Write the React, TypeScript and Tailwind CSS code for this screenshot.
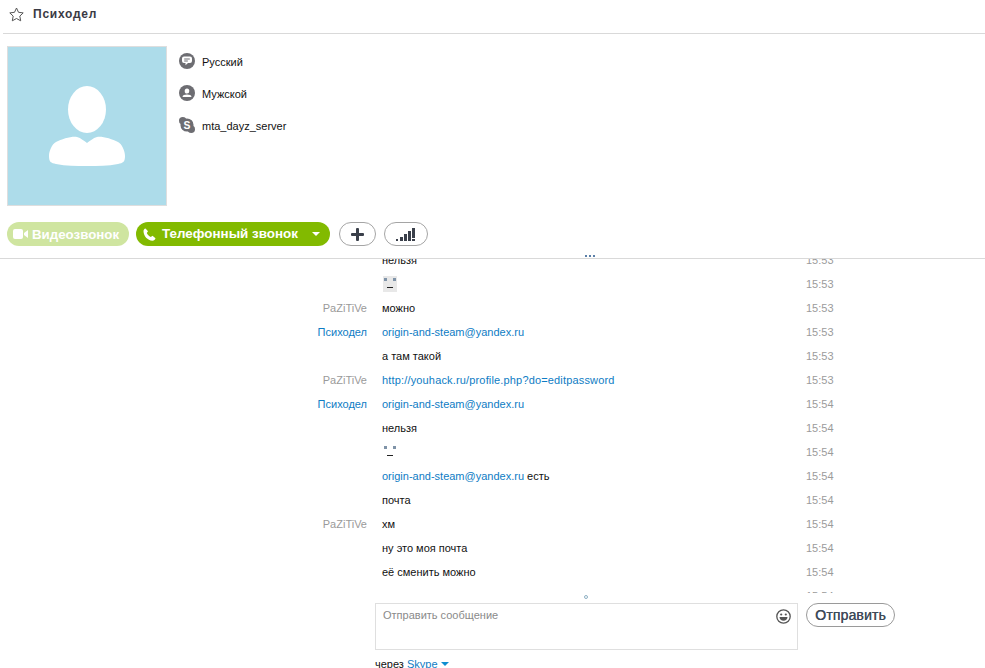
import React from "react";

type Row = { n?: string; c?: "g" | "b"; m: React.ReactNode; t: string };
const L = ({ children }: { children: React.ReactNode }) => <span className="text-[#0e7cc4]">{children}</span>;
const Face = ({ bg }: { bg?: boolean }) => (
  <span className={`relative block ml-[1px] w-[14px] h-[16px] ${bg ? "bg-[#e8e8e8]" : ""}`}>
    <span className="absolute left-[1px] top-[2px] w-[3px] h-[3px] bg-[#7f93a8]" />
    <span className="absolute right-[1px] top-[2px] w-[3px] h-[3px] bg-[#7f93a8]" />
    <span className="absolute left-[4px] top-[11px] w-[6px] h-[1px] bg-[#222]" />
  </span>
);
const EM = "origin-and-steam@yandex.ru";
const rows: Row[] = [
  { m: "нельзя", t: "15:53" },
  { m: <Face bg />, t: "15:53" },
  { n: "PaZiTiVe", c: "g", m: "можно", t: "15:53" },
  { n: "Психодел", c: "b", m: <L>{EM}</L>, t: "15:53" },
  { m: "а там такой", t: "15:53" },
  { n: "PaZiTiVe", c: "g", m: <span className="tracking-[0.16px]"><L>http://youhack.ru/profile.php?do=editpassword</L></span>, t: "15:53" },
  { n: "Психодел", c: "b", m: <L>{EM}</L>, t: "15:54" },
  { m: "нельзя", t: "15:54" },
  { m: <Face />, t: "15:54" },
  { m: <><L>{EM}</L> есть</>, t: "15:54" },
  { m: "почта", t: "15:54" },
  { n: "PaZiTiVe", c: "g", m: "хм", t: "15:54" },
  { m: "ну это моя почта", t: "15:54" },
  { m: "её сменить можно", t: "15:54" },
  { m: "", t: "15:54" },
];

const G = "#6d6d72";
const Lang = () => (
  <svg width="16" height="16" viewBox="0 0 16 16"><circle cx="8" cy="8" r="8" fill={G} /><path d="M5 3.500h6a2 2 0 0 1 2 2v2.500a2 2 0 0 1-2 2H9l-2.500 2.300V10H5a2 2 0 0 1-2-2V5.500a2 2 0 0 1 2-2z" fill="#fff" /><path d="M5.200 6h5.600M5.200 8h3.600" stroke={G} strokeWidth="1" /></svg>
);
const User = () => (
  <svg width="16" height="16" viewBox="0 0 16 16"><circle cx="8" cy="8" r="8" fill={G} /><ellipse cx="8" cy="6" rx="2.300" ry="2.600" fill="#fff" /><path d="M3.500 12c0-2 2.200-2.600 4.500-2.600s4.500.6 4.500 2.600z" fill="#fff" /></svg>
);
const SkypeI = () => (
  <svg width="16" height="16" viewBox="0 0 17 17"><circle cx="8.500" cy="8.500" r="7" fill={G} /><circle cx="4" cy="4" r="4" fill={G} /><circle cx="13" cy="13" r="4" fill={G} /><text x="8.500" y="12.500" textAnchor="middle" fontSize="11" fontWeight="700" fill="#fff" fontFamily="Liberation Sans">S</text></svg>
);

export default function App() {
  return (
    <div className="relative w-[985px] h-[668px] overflow-hidden bg-white text-[11px] text-[#222] font-['Liberation_Sans',sans-serif]">
      <header className="ml-[3px] h-[34px] border-b border-[#d9d9d9] flex items-center pl-[6px] pb-[5px] gap-[9px]">
        <svg width="15" height="15" viewBox="0 0 15 15" fill="none" stroke="#555" strokeWidth="1"><path d="M7.500 1l2 4.300 4.700.6-3.400 3.200.9 4.700-4.200-2.300-4.200 2.300.9-4.700L.8 5.900l4.700-.6z" /></svg>
        <span className="text-[12px] tracking-[0.75px] font-bold text-[#3a3a44]">Психодел</span>
      </header>

      <section className="flex pl-[7px] pt-[12px] h-[176px]">
        <div className="w-[160px] h-[160px] border border-[#dedede] bg-[#addcea] flex items-center justify-center">
          <svg width="78" height="80" viewBox="0 0 78 80" fill="#fff">
            <ellipse cx="39" cy="23.500" rx="19" ry="23.500" />
            <path d="M1 70C1 65 4 58 8 56C14 53 24 50 29 51C33 52 36 55 39 57C42 55 45 52 49 51C54 50 64 53 70 56C74 58 77 65 77 70C77 76 75 77 70 78C60 80 50 80 39 80C28 80 18 80 8 78C3 77 1 76 1 70z" />
          </svg>
        </div>
        <ul className="ml-[12px] pt-[7px] flex flex-col gap-[16px] text-[#111]">
          <li className="flex items-center gap-[7px] h-[16px]"><Lang /><span className="pt-[2px]">Русский</span></li>
          <li className="flex items-center gap-[7px] h-[16px]"><User /><span className="pt-[2px]">Мужской</span></li>
          <li className="flex items-center gap-[7px] h-[16px]"><SkypeI /><span className="pt-[2px]">mta_dayz_server</span></li>
        </ul>
      </section>

      <div className="flex items-start h-[49px] pl-[7px] pt-[12px] border-b border-[#d9d9d9]">
        <button className="w-[122px] h-[24px] rounded-full bg-[#cfe5a0] text-white font-bold text-[13.300px] flex items-center pl-[6px] gap-[4px]">
          <svg width="15" height="10" viewBox="0 0 15 10" fill="#fff"><rect width="10" height="10" rx="2" /><path d="M11 4l4-3v8l-4-3z" /></svg>
          <span className="pt-[1px]">Видеозвонок</span>
        </button>
        <button className="ml-[7px] w-[194px] h-[24px] rounded-full bg-[#82ba00] text-white font-bold text-[13.400px] flex items-center pl-[7px]">
          <svg width="13" height="13" viewBox="0 0 13 13" fill="#fff"><path d="M2.500.5L5 3.200 3.800 5c.7 1.600 2.200 3.200 4 4l1.700-1.300 3 2.600c-.4 1.500-1.500 2.400-3 2.400C4.500 12.500.5 8 .5 3 .5 1.800 1.300.8 2.500.5z" /></svg>
          <span className="ml-[6px] pt-[1px]">Телефонный звонок</span>
          <span className="ml-[14px] w-0 h-0 border-x-[4px] border-x-transparent border-t-[4px] border-t-white" />
        </button>
        <button className="ml-[9px] w-[37px] h-[24px] rounded-full border border-[#a5a5a5] flex items-center justify-center">
          <svg width="13" height="13" viewBox="0 0 13 13" fill="#3a3f4a"><rect x="5" width="3" height="13" rx="1" /><rect y="5" width="13" height="3" rx="1" /></svg>
        </button>
        <button className="ml-[8px] w-[44px] h-[24px] rounded-full border border-[#a5a5a5] flex items-center justify-center">
          <svg width="22" height="15" viewBox="0 0 22 15" fill="#3a3f4a"><rect x="1" y="12" width="2" height="2" /><rect x="5" y="10" width="3" height="4" /><rect x="9" y="7" width="3" height="7" /><rect x="13" y="4" width="3" height="10" /><rect x="17" y="1" width="3" height="10" /><rect x="17" y="12" width="3" height="2" /></svg>
        </button>
      </div>

      <span className="absolute left-[585px] top-[255px] w-[2px] h-[2px] bg-[#5b7fa8] shadow-[4px_0_0_#5b7fa8,8px_0_0_#5b7fa8]" />

      <div className="h-[334px] overflow-hidden">
        <div className="-mt-[11px]">
          {rows.map((r, i) => (
            <div key={i} className="grid grid-cols-[367px_424px_auto] h-[24px] items-center">
              <span className={`text-right ${r.c === "g" ? "text-[#9a9a9a]" : "text-[#0e7cc4]"}`}>{r.n}</span>
              <span className="pl-[15px] text-[#111]">{r.m}</span>
              <span className="pl-[15px] text-[#9b9b9b]">{r.t}</span>
            </div>
          ))}
        </div>
      </div>

      <span className="absolute left-[584px] top-[595px] w-[4px] h-[4px] rounded-full border border-[#8fb0c4]" />

      <div className="flex pl-[375px] pt-[10px] items-start">
        <div className="relative w-[423px] h-[47px] border border-[#dfdfdf] px-[7px] py-[3px] text-[#8a8a8a]">
          Отправить сообщение
          <svg className="absolute right-[6px] top-[5px]" width="15" height="15" viewBox="0 0 15 15"><circle cx="7.500" cy="7.500" r="6.700" fill="none" stroke="#555" strokeWidth="1.300" /><circle cx="5.200" cy="5.500" r="1.100" fill="#555" /><circle cx="9.800" cy="5.500" r="1.100" fill="#555" /><path d="M3.500 8h8c0 2.400-1.800 3.800-4 3.800S3.500 10.400 3.500 8z" fill="#555" /></svg>
        </div>
        <button className="ml-[8px] w-[89px] h-[24px] pt-[1px] rounded-full border border-[#9a9a9a] text-[14px] tracking-[0.15px] text-[#3f4b5a] [text-shadow:0.3px_0_0_#3f4b5a]">Отправить</button>
      </div>
      <div className="pl-[375px] pt-[6px] flex items-center text-[#111]">
        через&nbsp;<L>Skype</L>
        <span className="ml-[3px] w-0 h-0 border-x-[4px] border-x-transparent border-t-[4px] border-t-[#0e8ed0]" />
      </div>
    </div>
  );
}
